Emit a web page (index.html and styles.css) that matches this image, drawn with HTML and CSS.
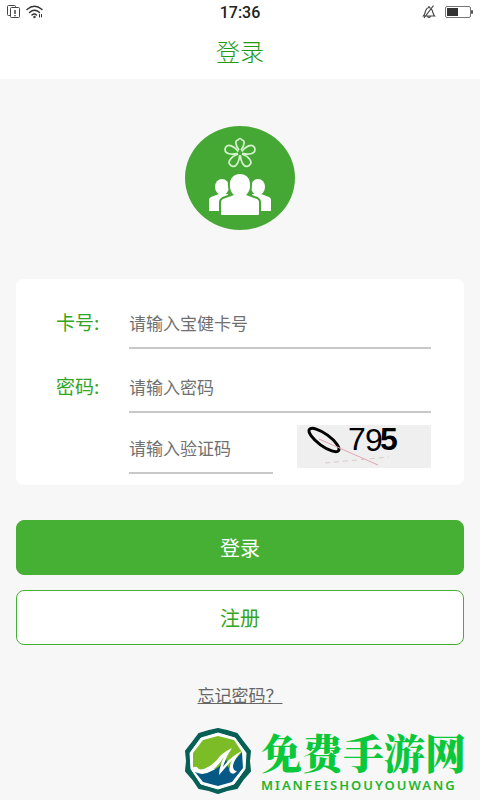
FILE: index.html
```html
<!DOCTYPE html>
<html lang="zh-CN">
  <head>
    <meta charset="utf-8">
    <meta name="viewport" content="width=device-width, initial-scale=1">
    <title>登录</title>
    <link rel="stylesheet" href="styles.css">
  </head>

  <body>
    <header class="header">
      <div class="status_bar">
        <div class="status_left">
          <svg width="14" height="14" viewBox="0 0 14 14" fill="none" stroke="#444">
            <path d="M3.500 10.500H1.500q-1 0-1-1V1.500q0-1 1-1h6q1 0 1 1v1"/>
            <rect x="3.500" y="2.500" width="9" height="10" rx="1"/>
            <path d="M8 5v4M8 10v1.200" stroke-width="1.500"/>
          </svg>
          <svg width="18" height="14" viewBox="0 0 18 14" fill="none" stroke="#333" stroke-width="1.400" stroke-linecap="round">
            <path d="M1 4.500Q8.500-2 16 4.500M3.500 7.500Q8.500 3 13.500 7.500M6 10Q8.500 8 10.500 10"/>
            <circle cx="8.500" cy="12" r=".5"/>
            <path d="M13.500 12V9.500M15.500 9.500V12" stroke-width="1"/>
          </svg>
        </div>
        <span class="time">17:36</span>
        <div class="status_right">
          <svg width="14" height="14" viewBox="0 0 14 14" fill="none" stroke="#444" stroke-width="1.200">
            <path d="M1.500 11C4 8.500 2.500 3 7 2.500C11.500 3 10 8.500 12.500 11ZM7 1v1.500M5.500 11.500q1.500 2 3 0M11.500 .5L2 13"/>
          </svg>
          <svg width="28" height="13" viewBox="0 0 28 13">
            <rect x=".5" y=".5" width="25" height="11" rx="1.500" fill="#fff" stroke="#777"/>
            <rect x="2" y="2" width="11" height="8" fill="#333"/>
            <rect x="26" y="4" width="2" height="4" rx="1" fill="#555"/>
          </svg>
        </div>
      </div>
      <h1 class="title">登录</h1>
    </header>

    <main class="container">
      <svg class="logo" width="112" height="106" viewBox="0 0 112 106">
        <ellipse cx="56" cy="53" rx="55" ry="52" fill="#46a834"/>
        <g fill="none" stroke="#d5f3cd" stroke-width="1.700" stroke-linejoin="round">
          <path d="M55 25C51 20 51 15 54 15Q56 12 58 15C61 15 61 20 57 25"/>
          <path d="M55 26C51 20 51 14 54 13Q56 12 58 13C61 14 61 20 57 26" transform="rotate(72 56 28)"/>
          <path d="M55 26C51 20 51 14 54 13Q56 12 58 13C61 14 61 20 57 26" transform="rotate(144 56 28)"/>
          <path d="M55 26C51 20 51 14 54 13Q56 12 58 13C61 14 61 20 57 26" transform="rotate(216 56 28)"/>
          <path d="M55 26C51 20 51 14 54 13Q56 12 58 13C61 14 61 20 57 26" transform="rotate(288 56 28)"/>
        </g>
        <g fill="#fff">
          <ellipse cx="38" cy="62" rx="7" ry="8"/>
          <path d="M25 86V75Q25 73 27 72L35 69H44V86Z"/>
          <ellipse cx="74" cy="62" rx="7" ry="8"/>
          <path d="M87 86V75Q87 73 85 72L77 69H68V86Z"/>
        </g>
        <g fill="#fff" stroke="#46a834" stroke-width="4" stroke-linejoin="round" paint-order="stroke">
          <path d="M37 89V77Q37 75 39 74L50 70C45 65 46 60 46 58C47 46 65 46 66 58C66 60 67 65 62 70L73 74Q75 75 75 77V89Q75 90 74 90H38Q37 90 37 89Z"/>
        </g>
      </svg>

      <form class="login_form" id="login">
        <div class="row">
          <label for="card">卡号:</label>
          <input type="text" id="card" placeholder="请输入宝健卡号">
        </div>
        <div class="row">
          <label for="password">密码:</label>
          <input type="password" id="password" placeholder="请输入密码">
        </div>
        <div class="row code_row">
          <input type="text" id="code" aria-label="验证码" placeholder="请输入验证码">
          <svg class="captcha" viewBox="0 0 134 43">
            <ellipse cx="27" cy="15" rx="18" ry="6" transform="rotate(36 27 15)" fill="none" stroke="#000" stroke-width="3"/>
            <path d="M22 14L81 40" stroke="#dfa5b0" stroke-width="1"/>
            <path d="M28 38L92 32" stroke="#dcc9cc" stroke-width="1" stroke-dasharray="5 4"/>
            <text x="51" y="25">7</text>
            <text x="68" y="26">9</text>
            <text x="83" y="25" class="bold">5</text>
          </svg>
        </div>
      </form>

      <div class="buttons">
        <button type="submit" form="login" class="btn btn_login">登录</button>
        <button type="button" class="btn">注册</button>
      </div>

      <a class="forget" href="#">忘记密码？</a>
    </main>

    <footer class="footer">
      <svg width="68" height="66" viewBox="0 0 68 66">
        <path d="M25 3L34 1L43 3L53 6L59 14L66 23L65 33L66 43L59 51L53 60L43 62L34 65L25 62L15 60L9 51L2 43L3 33L2 23L9 14L15 6Z" fill="#075f55" stroke="#075f55" stroke-width="2" stroke-linejoin="round"/>
        <path d="M34 5L51 10L62 25L61 41L50 56L34 61L17 56L7 41L6 25L17 10Z" fill="#fff" stroke="#fff" stroke-linejoin="round"/>
        <path d="M34 8L50 12L58 24L47 40L9 42L9 25L19 12Z" fill="#7cbd27"/>
        <path d="M11 44Q31 48 42 30L44 40L58 24L59 40L48 54L34 58L19 54Z" fill="#075985"/>
        <path d="M8 41Q9 38 13 39Q15 43 20 41Q30 37 36 28Q40 24 48 20Q42 28 39 39Q47 28 58 23Q50 31 49 38Q49 43 53 43Q49 48 46 44Q44 41 48 32L35 47Q35 39 40 29Q29 46 18 46Q11 45 8 41Z" fill="#fff"/>
      </svg>
      <div class="brand">
        <div class="brand_name">免费手游网</div>
        <div class="brand_en">MIANFEISHOUYOUWANG</div>
      </div>
    </footer>
  </body>
</html>
```
FILE: styles.css
```css
* {
  box-sizing: border-box;
}

body {
  min-height: 100vh;
  margin: 0;
  display: flex;
  flex-direction: column;
  background-color: #f7f7f7;
  font-family: "Noto Sans CJK SC", sans-serif;
}

svg {
  display: block;
}

.header {
  background-color: #fff;
  height: 79px;
}

.status_bar {
  display: grid;
  grid-template-columns: 1fr auto 1fr;
  align-items: center;
  height: 24px;
  padding: 0 7px;
}

.status_left,
.status_right {
  display: flex;
  align-items: center;
  gap: 5px;
}

.status_right {
  justify-content: flex-end;
  gap: 9px;
}

.time {
  font-family: Roboto, sans-serif;
  font-size: 16px;
  font-weight: 500;
  color: #222;
}

.title {
  margin: 0;
  font-size: 24px;
  line-height: 54px;
  font-weight: 300;
  text-align: center;
  color: #229a12;
}

.container {
  padding: 46px 16px 0;
  display: flex;
  flex-direction: column;
  align-items: center;
}

.login_form {
  width: 100%;
  margin-top: 48px;
  padding: 20px 33px 11px 40px;
  background-color: #fff;
  border-radius: 8px;
}

.row {
  display: flex;
  align-items: flex-start;
  height: 64px;
}

.row label {
  width: 73px;
  flex: none;
  font-size: 19px;
  line-height: 46px;
  color: #32a622;
}

.row input {
  flex: 1;
  min-width: 0;
  height: 50px;
  padding: 0 0 2px;
  border: none;
  border-bottom: 2px solid #c8c8c8;
  background: none;
  font-family: inherit;
  font-size: 17px;
  outline: none;
}

.row input::placeholder {
  color: #707070;
  opacity: 1;
}

.row.code_row {
  height: 47px;
  margin-top: -2px;
  margin-bottom: 2px;
  padding-left: 73px;
  gap: 24px;
}

.code_row input {
  height: 49px;
}

.captcha {
  width: 134px;
  height: 43px;
  flex: none;
  background-color: #efefef;
  font-family: "Liberation Sans", sans-serif;
  font-size: 32px;
}

.captcha .bold {
  font-weight: bold;
}

.buttons {
  width: 100%;
  margin-top: 35px;
  display: flex;
  flex-direction: column;
  gap: 15px;
}

.btn {
  height: 55px;
  padding: 0;
  border: 1px solid #46b035;
  border-radius: 8px;
  background-color: #fff;
  font-family: inherit;
  font-size: 20px;
  color: #32a622;
}

.btn_login {
  background-color: #46b035;
  color: #fff;
}

.forget {
  margin-top: 37px;
  font-size: 17px;
  line-height: 26px;
  color: #666;
}

.footer {
  margin-top: auto;
  padding: 0 14px 6px;
  display: flex;
  justify-content: flex-end;
  align-items: center;
  gap: 9px;
}

.brand_name {
  font-family: "Noto Serif CJK SC", "Noto Sans CJK SC", serif;
  font-size: 41px;
  line-height: 48px;
  font-weight: 900;
  color: #0bc83b;
}

.brand_en {
  font-family: "Noto Sans", sans-serif;
  font-size: 13px;
  line-height: 18px;
  font-weight: 600;
  letter-spacing: 2px;
  color: #22b52b;
}
```
